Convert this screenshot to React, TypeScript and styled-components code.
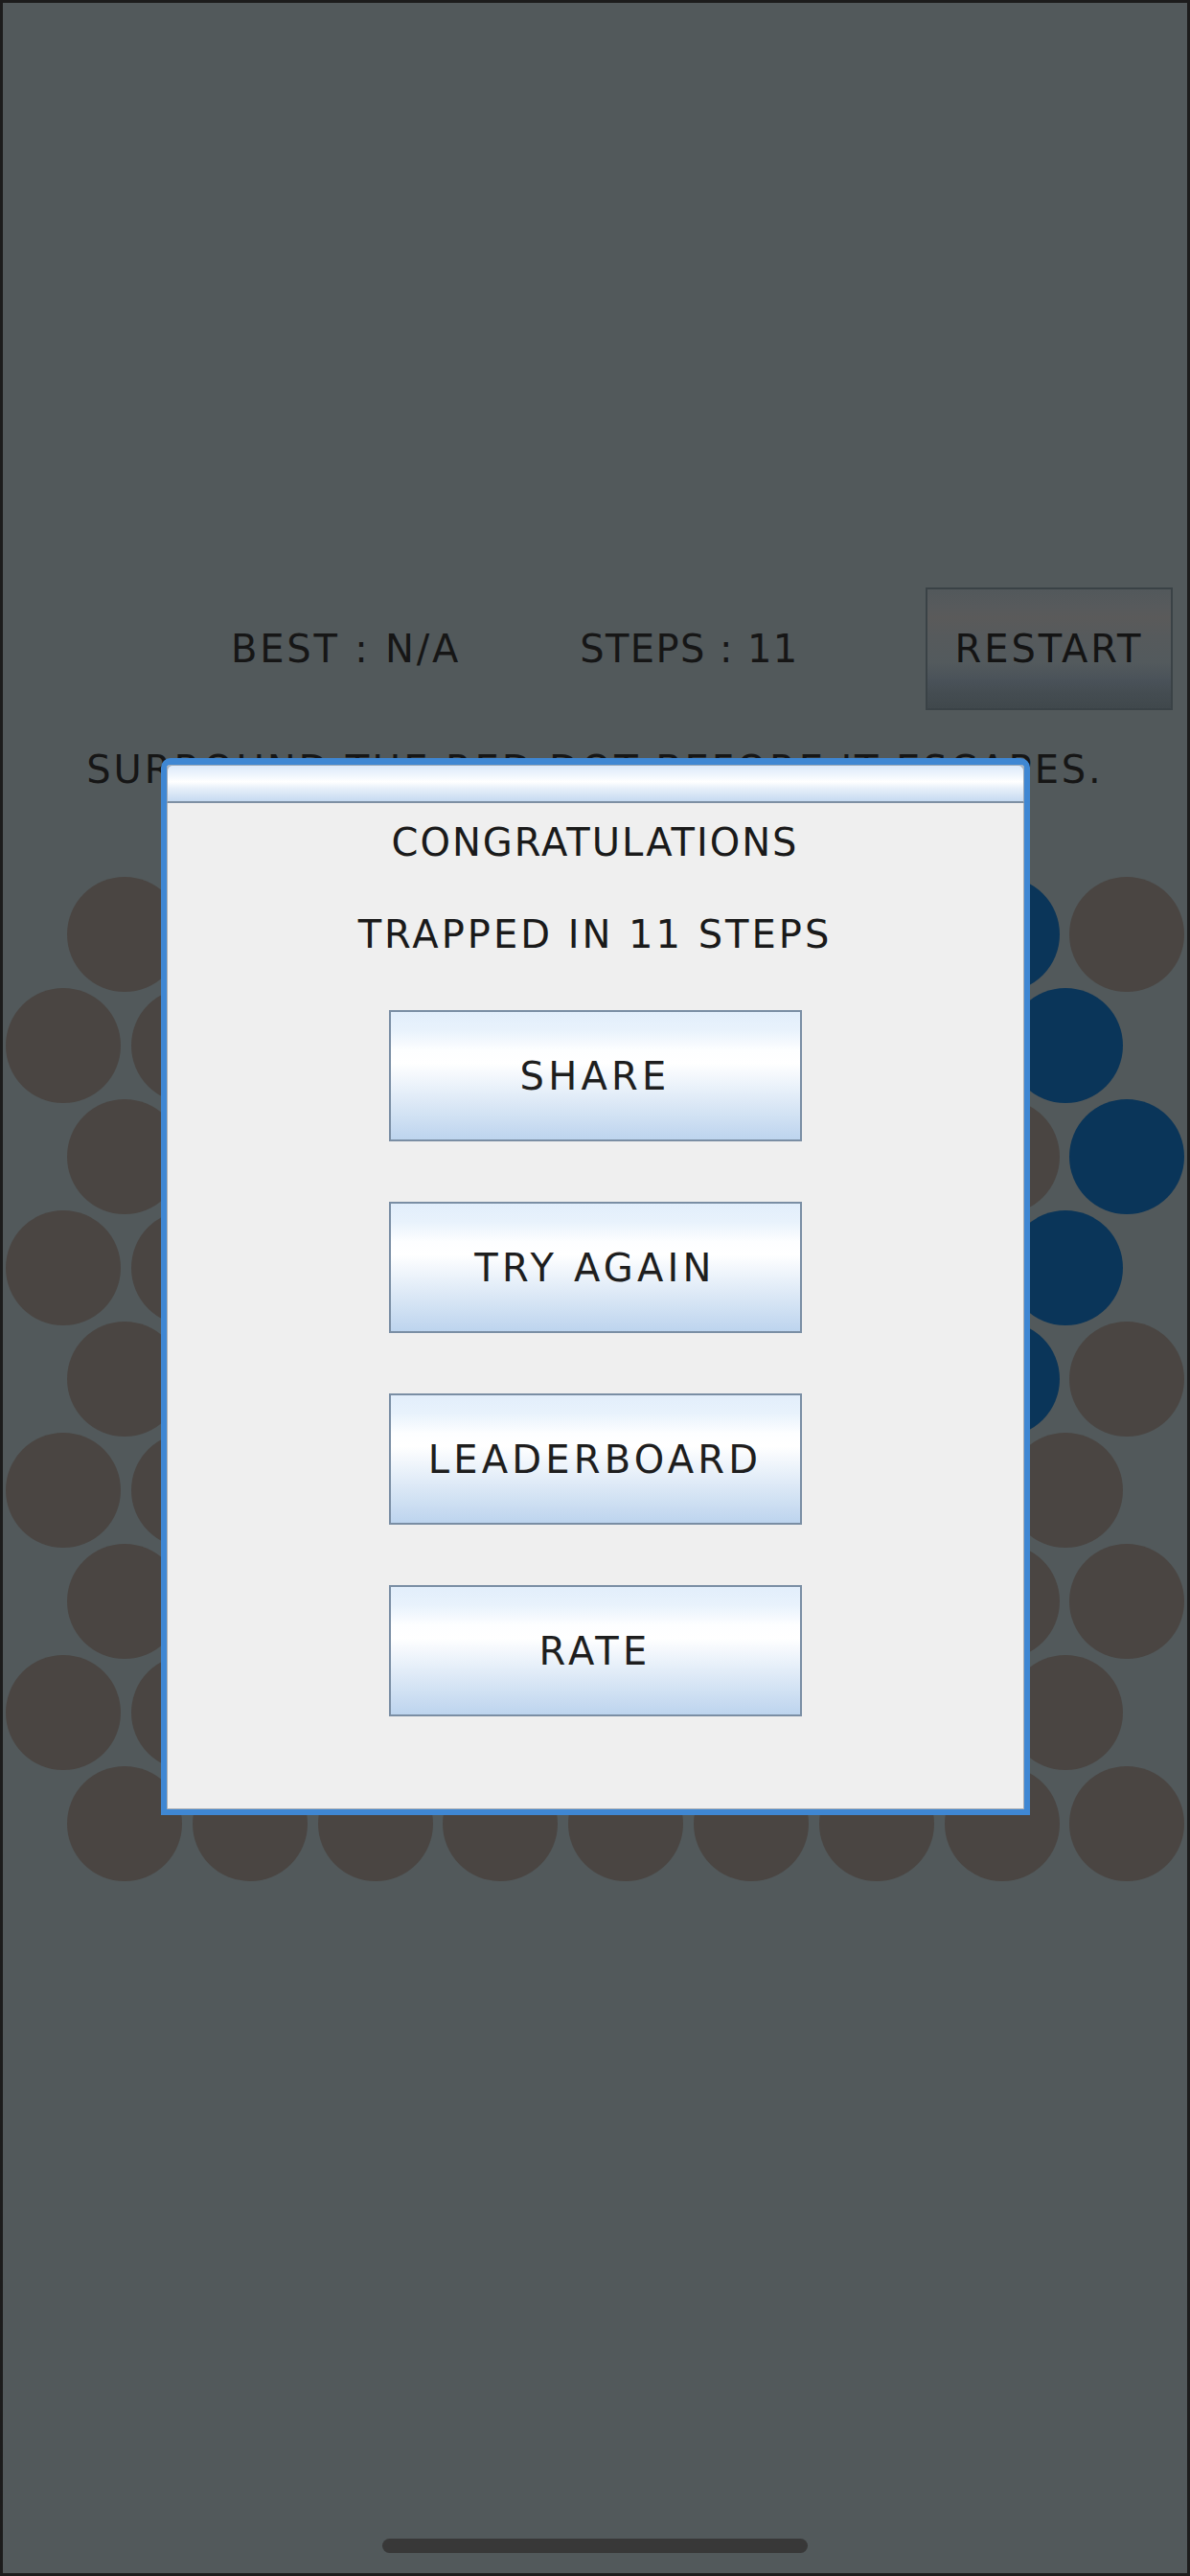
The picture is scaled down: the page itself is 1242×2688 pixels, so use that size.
import React from "react";
import styled, { createGlobalStyle } from "styled-components";

const GlobalStyle = createGlobalStyle`
  html, body {
    margin: 0;
    padding: 0;
    background: #1c1c1c;
  }
  * {
    box-sizing: border-box;
  }
`;

const Frame = styled.div`
  position: relative;
  width: 1242px;
  height: 2688px;
  border: 3px solid #1c1c1c;
  background: #52595b;
  display: flex;
  flex-direction: column;
  font-family: "DejaVu Sans", "Liberation Sans", sans-serif;
  color: #161616;
  overflow: hidden;
`;

const Header = styled.div`
  display: flex;
  align-items: center;
  margin-top: 610px;
  padding-left: 238px;
  padding-right: 15px;
`;

const Stat = styled.div<{ $offset?: number; $spacing: number }>`
  margin-left: ${(p) => p.$offset ?? 0}px;
  font-size: 40px;
  line-height: 48px;
  letter-spacing: ${(p) => p.$spacing}px;
  white-space: nowrap;
`;

const RestartButton = styled.button`
  margin-left: auto;
  width: 258px;
  height: 128px;
  border: 2px solid #3a4246;
  background: linear-gradient(
    #52585b 0%,
    #575a5c 14%,
    #5a5a5a 24%,
    #565a5c 40%,
    #535a5d 62%,
    #4a5259 76%,
    #444c51 88%,
    #40484c 100%
  );
  font-family: inherit;
  font-size: 40px;
  letter-spacing: 2.9px;
  color: #141414;
  padding: 0;
`;

const Instruction = styled.div`
  margin-top: 38px;
  text-align: center;
  font-size: 40px;
  line-height: 48px;
  letter-spacing: 2.9px;
  white-space: nowrap;
`;

const Board = styled.div`
  margin-top: 88px;
  display: flex;
  flex-direction: column;
`;

const BoardRow = styled.div<{ $shifted: boolean }>`
  display: flex;
  gap: 10.8px;
  padding-left: ${(p) => (p.$shifted ? 67 : 3)}px;
  & + & {
    margin-top: -4px;
  }
`;

const Dot = styled.div<{ $kind: "empty" | "wall" | "cat" }>`
  flex: none;
  width: 120px;
  height: 120px;
  border-radius: 50%;
  background: ${(p) =>
    p.$kind === "wall" ? "#0a3559" : p.$kind === "cat" ? "#6a2222" : "#4a4542"};
`;

const HomeBar = styled.div`
  margin: auto auto 21px;
  width: 444px;
  height: 15px;
  border-radius: 8px;
  background: #383838;
`;

const Overlay = styled.div`
  position: absolute;
  inset: 0;
  display: flex;
  align-items: center;
  justify-content: center;
`;

const Dialog = styled.div`
  margin-top: -3px;
  width: 907px;
  height: 1103px;
  border: 6px solid #3f87d3;
  border-top-width: 7px;
  border-radius: 10px 10px 0 0;
  background: #efefef;
  display: flex;
  flex-direction: column;
  box-shadow: inset 0 0 0 1px #a9adb2;
`;

const TitleBar = styled.div`
  height: 40px;
  border-radius: 6px 6px 0 0;
  border: 1px solid #9aa8b8;
  border-bottom: 2px solid #7d8fa3;
  background: linear-gradient(
    #dce9f9 0%,
    #eef5fd 25%,
    #ffffff 45%,
    #e6eff9 65%,
    #c6daf1 100%
  );
`;

const DialogBody = styled.div`
  display: flex;
  flex-direction: column;
  align-items: center;
  padding-top: 17px;
`;

const DialogText = styled.div<{ $spacing: number; $gap?: number }>`
  margin-top: ${(p) => p.$gap ?? 0}px;
  font-size: 40px;
  line-height: 48px;
  letter-spacing: ${(p) => p.$spacing}px;
  color: #1a1a1a;
  white-space: nowrap;
`;

const ButtonList = styled.div`
  margin-top: 55px;
  display: flex;
  flex-direction: column;
  gap: 63px;
`;

const DialogButton = styled.button`
  width: 431px;
  height: 137px;
  border: 2px solid #7a8ea4;
  padding: 0;
  background: linear-gradient(
    #e2eefb 0%,
    #e8f2fc 14%,
    #fdfeff 30%,
    #ffffff 40%,
    #eef4fb 55%,
    #d8e6f5 75%,
    #bdd4ee 100%
  );
  font-family: "DejaVu Sans", "Liberation Sans", sans-serif;
  font-size: 40px;
  letter-spacing: 4.2px;
  color: #1e1e1e;
`;

const ROWS = 9;
const COLS = 9;
const walls = new Set(["0-7", "1-8", "2-8", "3-8", "4-7"]);
const cat = "4-4";

const actions = ["SHARE", "TRY AGAIN", "LEADERBOARD", "RATE"];

export default function App() {
  return (
    <>
      <GlobalStyle />
      <Frame>
        <Header>
          <Stat $spacing={2.8}>BEST : N/A</Stat>
          <Stat $offset={124} $spacing={1.4}>
            STEPS : 11
          </Stat>
          <RestartButton>RESTART</RestartButton>
        </Header>
        <Instruction>SURROUND THE RED DOT BEFORE IT ESCAPES.</Instruction>
        <Board>
          {Array.from({ length: ROWS }, (_, r) => (
            <BoardRow key={r} $shifted={r % 2 === 0}>
              {Array.from({ length: COLS }, (_, c) => {
                const key = `${r}-${c}`;
                const kind = walls.has(key) ? "wall" : key === cat ? "cat" : "empty";
                return <Dot key={c} $kind={kind} />;
              })}
            </BoardRow>
          ))}
        </Board>
        <HomeBar />
        <Overlay>
          <Dialog>
            <TitleBar />
            <DialogBody>
              <DialogText $spacing={2}>CONGRATULATIONS</DialogText>
              <DialogText $spacing={3} $gap={48}>
                TRAPPED IN 11 STEPS
              </DialogText>
              <ButtonList>
                {actions.map((a) => (
                  <DialogButton key={a}>{a}</DialogButton>
                ))}
              </ButtonList>
            </DialogBody>
          </Dialog>
        </Overlay>
      </Frame>
    </>
  );
}
